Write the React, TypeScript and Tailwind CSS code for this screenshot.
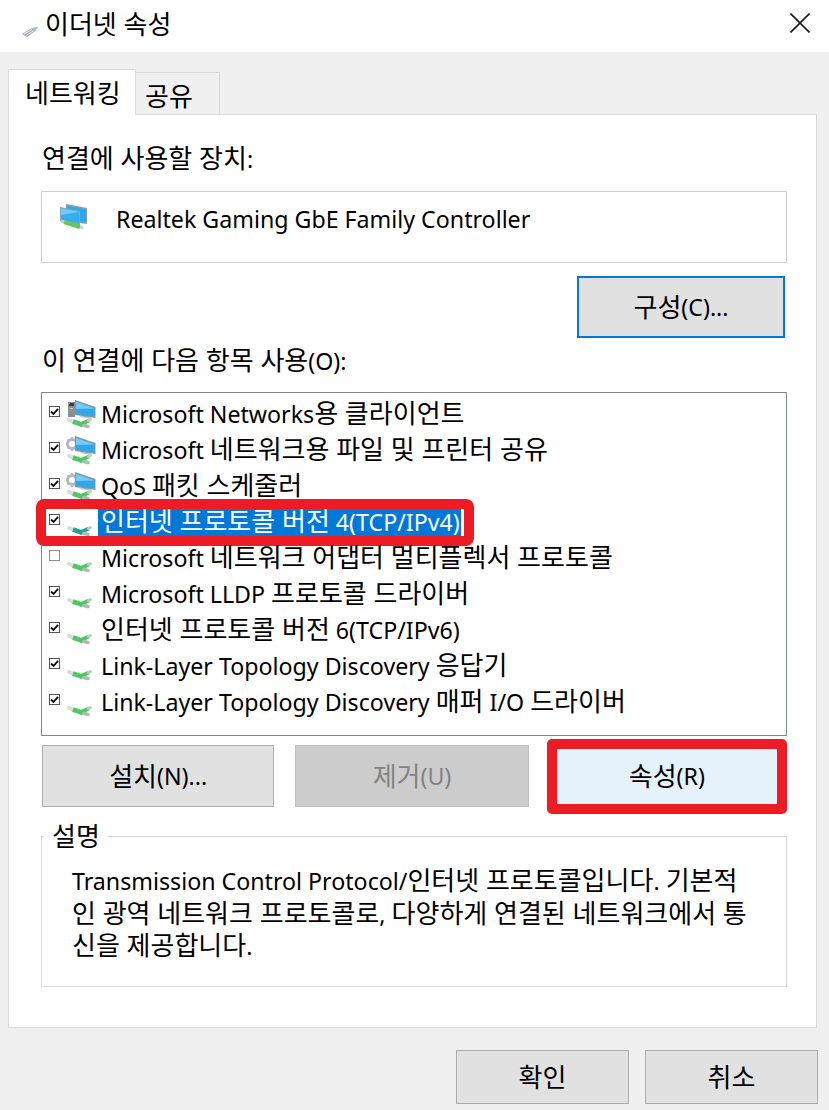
const rows = [
  { label: 'Microsoft Networks용 클라이언트', checked: true, icon: 'client' },
  { label: 'Microsoft 네트워크용 파일 및 프린터 공유', checked: true, icon: 'service' },
  { label: 'QoS 패킷 스케줄러', checked: true, icon: 'service' },
  { label: '인터넷 프로토콜 버전 4(TCP/IPv4)', checked: true, icon: 'plug', selected: true },
  { label: 'Microsoft 네트워크 어댑터 멀티플렉서 프로토콜', checked: false, icon: 'plug' },
  { label: 'Microsoft LLDP 프로토콜 드라이버', checked: true, icon: 'plug' },
  { label: '인터넷 프로토콜 버전 6(TCP/IPv6)', checked: true, icon: 'plug' },
  { label: 'Link-Layer Topology Discovery 응답기', checked: true, icon: 'plug' },
  { label: 'Link-Layer Topology Discovery 매퍼 I/O 드라이버', checked: true, icon: 'plug' },
];

// hangul runs stay at the base size, latin runs get the smaller one
const T = ({ text }: { text: string }) => {
  const parts = text.match(/[가-힣]+(?: [가-힣]+)*|[^가-힣]+/g) ?? [];
  return (
    <>
      {parts.map((part, i) =>
        /[가-힣]/.test(part) ? (
          <span key={i}>{part}</span>
        ) : (
          <span key={i} className="text-[23.2px]">{part}</span>
        )
      )}
    </>
  );
};

const Plug = ({ tint = false }: { tint?: boolean }) => {
  const color = tint ? '#2f9c9c' : '#4cc864';
  return (
    <g>
      <path d="M3 23 L8 25" stroke="#d5ded7" strokeWidth="4" strokeLinecap="round" />
      <path d="M7 24.5 L17 28" stroke={color} strokeWidth="5" />
      <path d="M15 27 L23 23.5" stroke={color} strokeWidth="4" />
      <path d="M18 28.5 L22 29.5" stroke="#b0bab3" strokeWidth="3.5" strokeLinecap="round" />
      <path d="M22.5 23.5 L24.5 22.5" stroke="#c0cac3" strokeWidth="3" strokeLinecap="round" />
    </g>
  );
};

const Monitor = () => (
  <g>
    <path d="M16 17 L24 19 L25 22 L14 20 Z" fill="#c4c8cc" />
    <path d="M9 3 L29.5 10 L29.5 21 L9 18 Z" fill="#7d98ac" />
    <path d="M10 5 L28.5 11.5 L28.5 19.5 L10 16.5 Z" fill="#2fa8ea" />
    <path d="M10 5 L28.5 11.5 L10 12 Z" fill="#74ccf6" />
  </g>
);

const RowIcon = ({ type, tint }: { type: string; tint?: boolean }) => (
  <svg viewBox="0 0 32 32" className="w-8 h-8 shrink-0">
    {type === 'client' && (
      <g>
        <rect x="2" y="5" width="7" height="15" fill="#8a8f94" />
        <rect x="3" y="6" width="5" height="3" fill="#3a3f44" />
        <rect x="4" y="11" width="3" height="1" fill="#d8dcdf" />
        <rect x="3" y="6" width="1" height="1" fill="#4cd864" />
      </g>
    )}
    {type === 'service' && (
      <g>
        <circle cx="6" cy="11" r="4.5" fill="none" stroke="#b4b8bc" strokeWidth="3" />
        <path d="M6 4 V6 M6 16 V18 M0.5 11 H2 M1.5 6.5 L3 8 M1.5 15.5 L3 14" stroke="#b4b8bc" strokeWidth="2.2" />
      </g>
    )}
    {type !== 'plug' && <Monitor />}
    <Plug tint={tint} />
  </svg>
);

const Checkbox = ({ checked }: { checked: boolean }) => (
  <span className={`w-[11px] h-[11px] -mt-[3px] shrink-0 border bg-white flex items-center justify-center ${checked ? 'border-[#555]' : 'border-[#8e8e8e]'}`}>
    {checked && (
      <svg viewBox="0 0 9 9" className="w-[9px] h-[9px]">
        <path d="M1 4.5 L3.5 7 L8 1.8" fill="none" stroke="#000" strokeWidth="1.8" />
      </svg>
    )}
  </span>
);

const Button = ({ children, className = '' }: { children: React.ReactNode; className?: string }) => (
  <div className={`flex items-center justify-center border border-[#adadad] bg-[#e1e1e1] ${className}`}>
    {children}
  </div>
);

export default function App() {
  return (
    <div className="w-[829px] h-[1110px] overflow-hidden bg-[#f0f0f0] text-[26px] text-black font-['Noto_Sans','Noto_Sans_CJK_KR',sans-serif]">
      {/* title bar */}
      <div className="h-[52px] bg-white flex items-center">
        <svg viewBox="0 0 18 12" className="w-[18px] h-[12px] ml-[21px] mt-[11px] shrink-0">
          <path d="M1 8 L11 2 L15 4.5 L6 11 Z" fill="#a4aab0" />
          <path d="M3 8 L11 3.5 M5 9.5 L13 4.5" stroke="#eef1f3" strokeWidth="1" />
          <path d="M11 2 L17 0.5 L15 4.5 Z" fill="#8cc4e8" />
        </svg>
        <span className="ml-[6px] -mt-[5px] leading-[36px]">이더넷 속성</span>
        <svg viewBox="0 0 20 20" className="w-5 h-5 ml-auto mr-[19px] -mt-[6px] shrink-0">
          <path d="M0.5 0.5 L19.5 19.5 M19.5 0.5 L0.5 19.5" stroke="#1a1a1a" strokeWidth="1.6" />
        </svg>
      </div>

      {/* tabs */}
      <div className="flex items-end h-[62px] pl-2">
        <div className="w-[128px] h-[46px] bg-white border border-b-0 border-[#d9d9d9] flex items-center pl-4 relative z-10 -mb-px leading-[36px]">네트워킹</div>
        <div className="w-[84px] h-[42px] bg-[#f0f0f0] border border-l-0 border-b-0 border-[#d9d9d9] flex items-center pl-[9px] pt-1 leading-[36px]">공유</div>
      </div>

      {/* tab page */}
      <div className="w-[809px] h-[914px] ml-2 bg-white border border-[#d9d9d9] pt-[27px] px-8">
        <div className="leading-[32px] pl-px"><T text="연결에 사용할 장치:" /></div>
        <div className="mt-[16px] w-[746px] h-[72px] border border-[#cdcdcd] flex items-start pl-[18px] pt-[12px]">
          <svg viewBox="0 0 28 26" className="w-[28px] h-[26px] shrink-0">
            <path d="M6 0 L27 4 L27 20 L6 17 Z" fill="#7f9db4" />
            <path d="M7 2 L26 5.5 L26 18 L7 15 Z" fill="#2fa8ea" />
            <path d="M0 3 L20 7 L20 21 L0 17 Z" fill="#8aa4b8" />
            <path d="M1 4.5 L19 8 L19 19 L1 15.5 Z" fill="#35aef0" />
            <path d="M1 4.5 L19 8 L1 11 Z" fill="#74ccf6" />
            <path d="M4 18 L20 23" stroke="#63c85a" strokeWidth="4" />
            <path d="M1 17 L4 18 M20 23 L23 24" stroke="#c8ced2" strokeWidth="3" />
          </svg>
          <span className="ml-[28px] leading-[36px] -mt-[4px]"><T text="Realtek Gaming GbE Family Controller" /></span>
        </div>
        <div className="flex justify-end w-[744px] mt-[13px]">
          <Button className="w-[208px] h-[62px] !border-2 !border-[#0078d7]"><T text="구성(C)..." /></Button>
        </div>
        <div className="mt-[6px] leading-[32px] pl-px"><T text="이 연결에 다음 항목 사용(O):" /></div>
        <div className="mt-[15px] w-[746px] h-[344px] border border-[#828790] pt-[2px]">
          {rows.map((row) => (
            <div key={row.label} className="h-9 flex items-center relative">
              <div className="ml-[7px] mr-[6px]"><Checkbox checked={row.checked} /></div>
              <RowIcon type={row.icon} tint={row.selected} />
              <span className={`pl-[3px] pr-px h-[30px] leading-[30px] whitespace-nowrap ${row.selected ? 'bg-[#0078d7] text-white' : ''}`}><T text={row.label} /></span>
              {row.selected && (
                <div className="absolute left-[-6px] top-[-4px] w-[438px] h-[47px] border-[10px] border-[#ed1c24] rounded-lg" />
              )}
            </div>
          ))}
        </div>
        <div className="mt-[9px] flex w-[746px] pl-px">
          <Button className="w-[233px] h-[62px]"><T text="설치(N)..." /></Button>
          <Button className="w-[234px] h-[62px] ml-[21px] !bg-[#cccccc] !border-[#bfbfbf] text-[#838383]"><T text="제거(U)" /></Button>
          <div className="w-[241px] h-[75px] ml-[18px] -mt-[6px] border-[10px] border-[#ed1c24] rounded-[5px] bg-[#e5f1fb] flex items-center justify-center"><T text="속성(R)" /></div>
        </div>
        <div className="mt-[22px] w-[746px] h-[151px] border border-[#dcdcdc] relative pl-[30px] pr-[36px] pt-[28px] leading-[31.5px]">
          <span className="absolute left-[2px] -top-[17px] bg-white px-2 leading-[32px]">설명</span>
          <T text="Transmission Control Protocol/인터넷 프로토콜입니다. 기본적인 광역 네트워크 프로토콜로, 다양하게 연결된 네트워크에서 통신을 제공합니다." />
        </div>
      </div>

      {/* bottom buttons */}
      <div className="flex justify-end gap-4 pr-[11px] mt-[22px]">
        <Button className="w-[173px] h-[54px]">확인</Button>
        <Button className="w-[173px] h-[54px]">취소</Button>
      </div>
    </div>
  );
}
